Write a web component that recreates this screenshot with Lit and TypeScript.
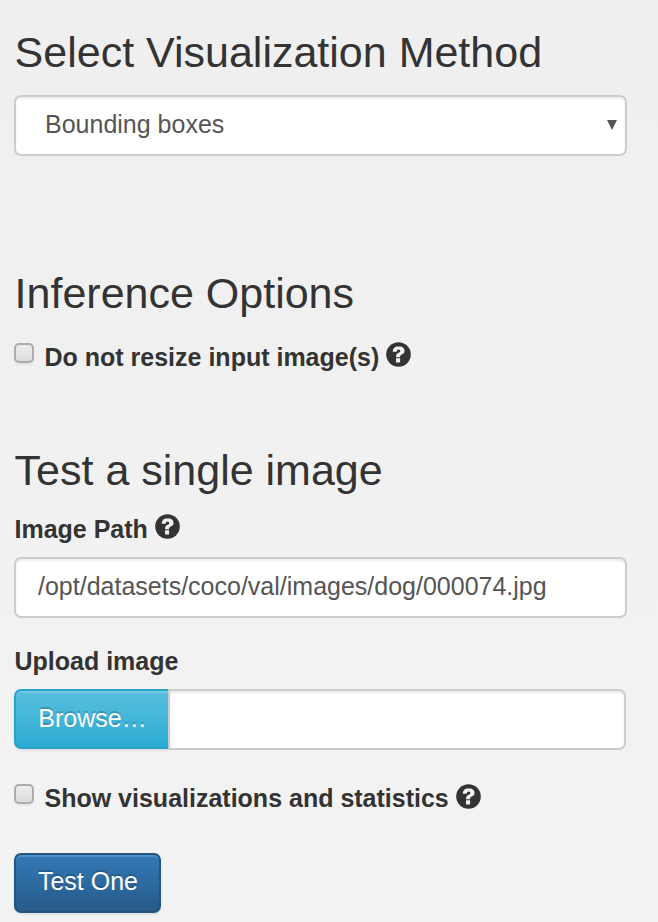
import { LitElement, html, css, svg } from "lit";
import { customElement } from "lit/decorators.js";

const helpIcon = html`<svg class="help" viewBox="0 0 1200 1200" aria-hidden="true">
  ${svg`<circle cx="600" cy="600" r="590" fill="currentColor"/>
  <path fill="#f0f0f0" transform="translate(-112 12) scale(1.2 1.02)" d="M595 190q-95 0-161 56q-72 60-74 196h158q8-54 26-77q18-22 48-22q38 0 56 20q16 17 16 44q0 34-22 58q-10 11-62 46q-52 34-72 78q-14 34-14 112h160q2-49 14-69q12-19 58-50q66-45 86-80q24-42 24-96q0-98-64-158q-66-62-183-62zM494 750v200h164v-200z"/>`}
</svg>`;

@customElement("app-root")
export class AppRoot extends LitElement {
  static styles = css`
    :host {
      display: block;
      box-sizing: border-box;
      height: 922px;
      overflow: hidden;
      padding: 28px 0 0 14px;
      background: linear-gradient(#efefef, #f3f3f3);
      color: #333;
      font: 25px/28px "Liberation Sans", Arial, sans-serif;
    }
    * { box-sizing: border-box; }
    h3 { margin: 0; padding-left: 0.6px; font-weight: 400; font-size: 43px; line-height: 48px; white-space: nowrap; }
    .inference { margin-top: 113px; }
    .single { margin-top: 75px; }
    .control {
      display: flex;
      align-items: center;
      width: 613px;
      height: 61px;
      border: 2px solid #ccc;
      border-radius: 7px;
      background: #fff;
      box-shadow: inset 0 2px 2px rgba(0, 0, 0, 0.075);
      color: #555;
      padding: 0 22px 3px;
    }
    .select { margin-top: 19px; padding: 0 8px 3px 29px; justify-content: space-between; }
    .arrow { width: 10px; height: 10px; margin-top: 2px; fill: #555; }
    .label { display: flex; height: 28px; padding-left: 0.5px; font-weight: 700; white-space: nowrap; }
    .help { width: 25px; height: 25px; margin: -1px 0 0 7px; flex: none; }
    .check {
      width: 20px;
      height: 20px;
      margin: 0 10.5px 0 -0.5px;
      border: 2px solid #adadad;
      border-radius: 5px;
      background: linear-gradient(#ededed, #dcdcdc);
      box-shadow: 0 2px 1px rgba(0, 0, 0, 0.06);
    }
    .resize { margin-top: 26px; }
    .path-label { margin-top: 21px; }
    .path, .upload { margin-top: 14px; }
    .upload-label { margin-top: 29px; }
    .upload { display: flex; width: 612px; }
    .btn {
      display: flex;
      align-items: center;
      justify-content: center;
      height: 60px;
      padding: 0 0 2px 1px;
      border: 2px solid;
      border-radius: 7px;
      color: #fff;
      font: inherit;
      text-shadow: 0 -2px 0 rgba(0, 0, 0, 0.2);
      box-shadow: inset 0 2px 0 rgba(255, 255, 255, 0.15), 0 2px 2px rgba(0, 0, 0, 0.075);
    }
    .browse {
      width: 154px;
      border-color: #28a4c9;
      border-right: 0;
      border-radius: 7px 0 0 7px;
      background: linear-gradient(#5bc0de, #2aabd2) border-box;
    }
    .file { flex: 1; width: auto; border-radius: 0 7px 7px 0; }
    .stats { margin-top: 34px; }
    .stats .help { margin-top: 0; }
    .test {
      width: 147px;
      margin-top: 41px;
      padding-bottom: 4px;
      border-color: #245580;
      background: linear-gradient(#337ab7, #265a88) border-box;
    }
  `;

  render() {
    return html`
      <h3>Select Visualization Method</h3>
      <div class="control select">
        <span>Bounding boxes</span>
        <svg class="arrow" viewBox="0 0 10 10"><path d="M0 0H10L5 10Z" /></svg>
      </div>
      <h3 class="inference">Inference Options</h3>
      <div class="label resize"><span class="check"></span>Do not resize input image(s) ${helpIcon}</div>
      <h3 class="single">Test a single image</h3>
      <div class="label path-label">Image Path ${helpIcon}</div>
      <div class="control path">/opt/datasets/coco/val/images/dog/000074.jpg</div>
      <div class="label upload-label">Upload image</div>
      <div class="upload">
        <button class="btn browse">Browse…</button>
        <div class="control file"></div>
      </div>
      <div class="label stats"><span class="check"></span>Show visualizations and statistics ${helpIcon}</div>
      <button class="btn test">Test One</button>
    `;
  }
}
